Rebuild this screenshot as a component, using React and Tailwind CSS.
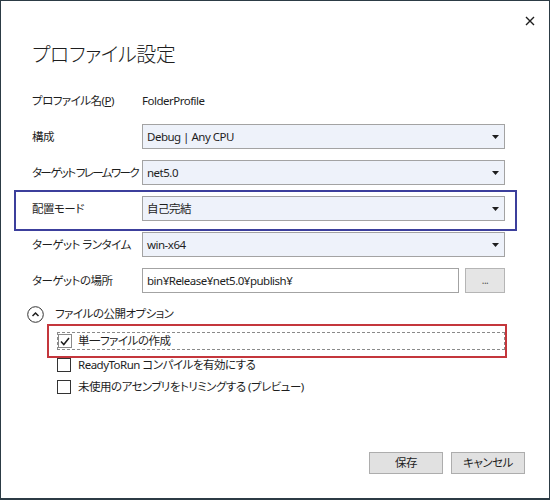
import React from "react";

function Arrow() {
  return (
    <svg width="7" height="4" viewBox="0 0 7 4" className="shrink-0">
      <path d="M0 0 H7 L3.5 4 Z" fill="#1e1e1e" />
    </svg>
  );
}

function Combo({ value }) {
  return (
    <div className="w-[363px] h-[25px] border border-[#a3a3a3] bg-[#eef2fa] flex items-center justify-between pl-[4px] pr-[5px]">
      <span>{value}</span>
      <Arrow />
    </div>
  );
}

function Row({ label, children, extra }) {
  return (
    <div className="relative h-[25px] flex items-center pl-[31px]">
      <div className="w-[110px] shrink-0 whitespace-nowrap overflow-hidden">{label}</div>
      {children}
      {extra}
    </div>
  );
}

function CheckBox({ checked, dashed }) {
  return (
    <div
      className={
        "w-[14px] h-[14px] shrink-0 flex items-center justify-center bg-white border " +
        (dashed ? "border-[#8a8a8a]" : "border-[#333333]")
      }
    >
      {checked && (
        <svg width="10" height="9" viewBox="0 0 10 9">
          <path d="M1 4.5 L3.8 7.5 L9 1" fill="none" stroke="#1e1e1e" strokeWidth="1.5" />
        </svg>
      )}
    </div>
  );
}

export default function App() {
  return (
    <div
      className="w-[550px] h-[500px] box-border border border-b-2 border-[#2c3b45] bg-white flex flex-col text-[11.5px] tracking-[-0.5px] text-[#1e1e1e] [font-feature-settings:'palt']"
      style={{ fontFamily: '"Noto Sans", "Noto Sans CJK JP", sans-serif' }}
    >
      <div className="h-[39px] flex justify-end items-start pt-[15px] pr-[14px]">
        <svg width="10" height="10" viewBox="0 0 10 10">
          <path d="M1 1 L9 9 M9 1 L1 9" stroke="#1e1e1e" strokeWidth="1.4" />
        </svg>
      </div>
      <div className="h-[30px] leading-[30px] pl-[31px] text-[20px] tracking-[-0.5px] font-light text-[#1e1e1e]">
        プロファイル設定
      </div>
      <div className="mt-[18px] flex flex-col gap-[11px]">
        <Row label={<span>プロファイル名(<span className="underline">P</span>)</span>}>
          <span>FolderProfile</span>
        </Row>
        <Row label="構成">
          <Combo value="Debug | Any CPU" />
        </Row>
        <Row label={<span className="tracking-[-1.6px]">ターゲット フレームワーク</span>}>
          <Combo value="net5.0" />
        </Row>
        <Row
          label="配置モード"
          extra={
            <div className="absolute left-[13px] top-[-6px] w-[503px] h-[41px] border-2 border-[#3c3f9c] pointer-events-none" />
          }
        >
          <Combo value="自己完結" />
        </Row>
        <Row label="ターゲット ランタイム">
          <Combo value="win-x64" />
        </Row>
        <Row label="ターゲットの場所">
          <div className="w-[317px] h-[25px] border border-[#a3a3a3] bg-white flex items-center pl-[4px]">
            bin¥Release¥net5.0¥publish¥
          </div>
          <div className="ml-[6px] w-[40px] h-[25px] border border-[#b5b5b5] bg-[#e5e5e5] flex items-center justify-center text-[10px] text-[#555]">
            ...
          </div>
        </Row>
      </div>
      <div className="mt-[11px] h-[20px] flex items-center pl-[26px]">
        <svg width="17" height="17" viewBox="0 0 17 17" className="shrink-0">
          <circle cx="8.5" cy="8.5" r="7.8" fill="none" stroke="#333" strokeWidth="1" />
          <path d="M5.5 10 L8.5 7 L11.5 10" fill="none" stroke="#1e1e1e" strokeWidth="1.5" />
        </svg>
        <span className="ml-[11px]">ファイルの公開オプション</span>
      </div>
      <div className="mt-[6px] flex flex-col">
        <div className="relative ml-[56px] w-[448px] h-[22px] flex items-center">
          <div className="absolute left-[-10px] top-[-6px] w-[460px] h-[34px] border-2 border-[#c4363c] pointer-events-none" />
          <div className="w-full h-[18px] border border-dashed border-[#8a8a8a] flex items-center">
            <CheckBox checked dashed />
            <span className="ml-[6px]">単一ファイルの作成</span>
          </div>
        </div>
        <div className="mt-[2px] ml-[56px] h-[22px] flex items-center">
          <CheckBox />
          <span className="ml-[7px]">ReadyToRun コンパイルを有効にする</span>
        </div>
        <div className="ml-[56px] h-[22px] flex items-center">
          <CheckBox />
          <span className="ml-[7px]">未使用のアセンブリをトリミングする (プレビュー)</span>
        </div>
      </div>
      <div className="mt-auto flex justify-end gap-[8px] pr-[24px] pb-[24px]">
        <div className="w-[74px] h-[22px] border border-[#adadad] bg-[#e1e1e1] flex items-center justify-center">
          保存
        </div>
        <div className="w-[74px] h-[22px] border border-[#adadad] bg-[#e1e1e1] flex items-center justify-center">
          キャンセル
        </div>
      </div>
    </div>
  );
}
